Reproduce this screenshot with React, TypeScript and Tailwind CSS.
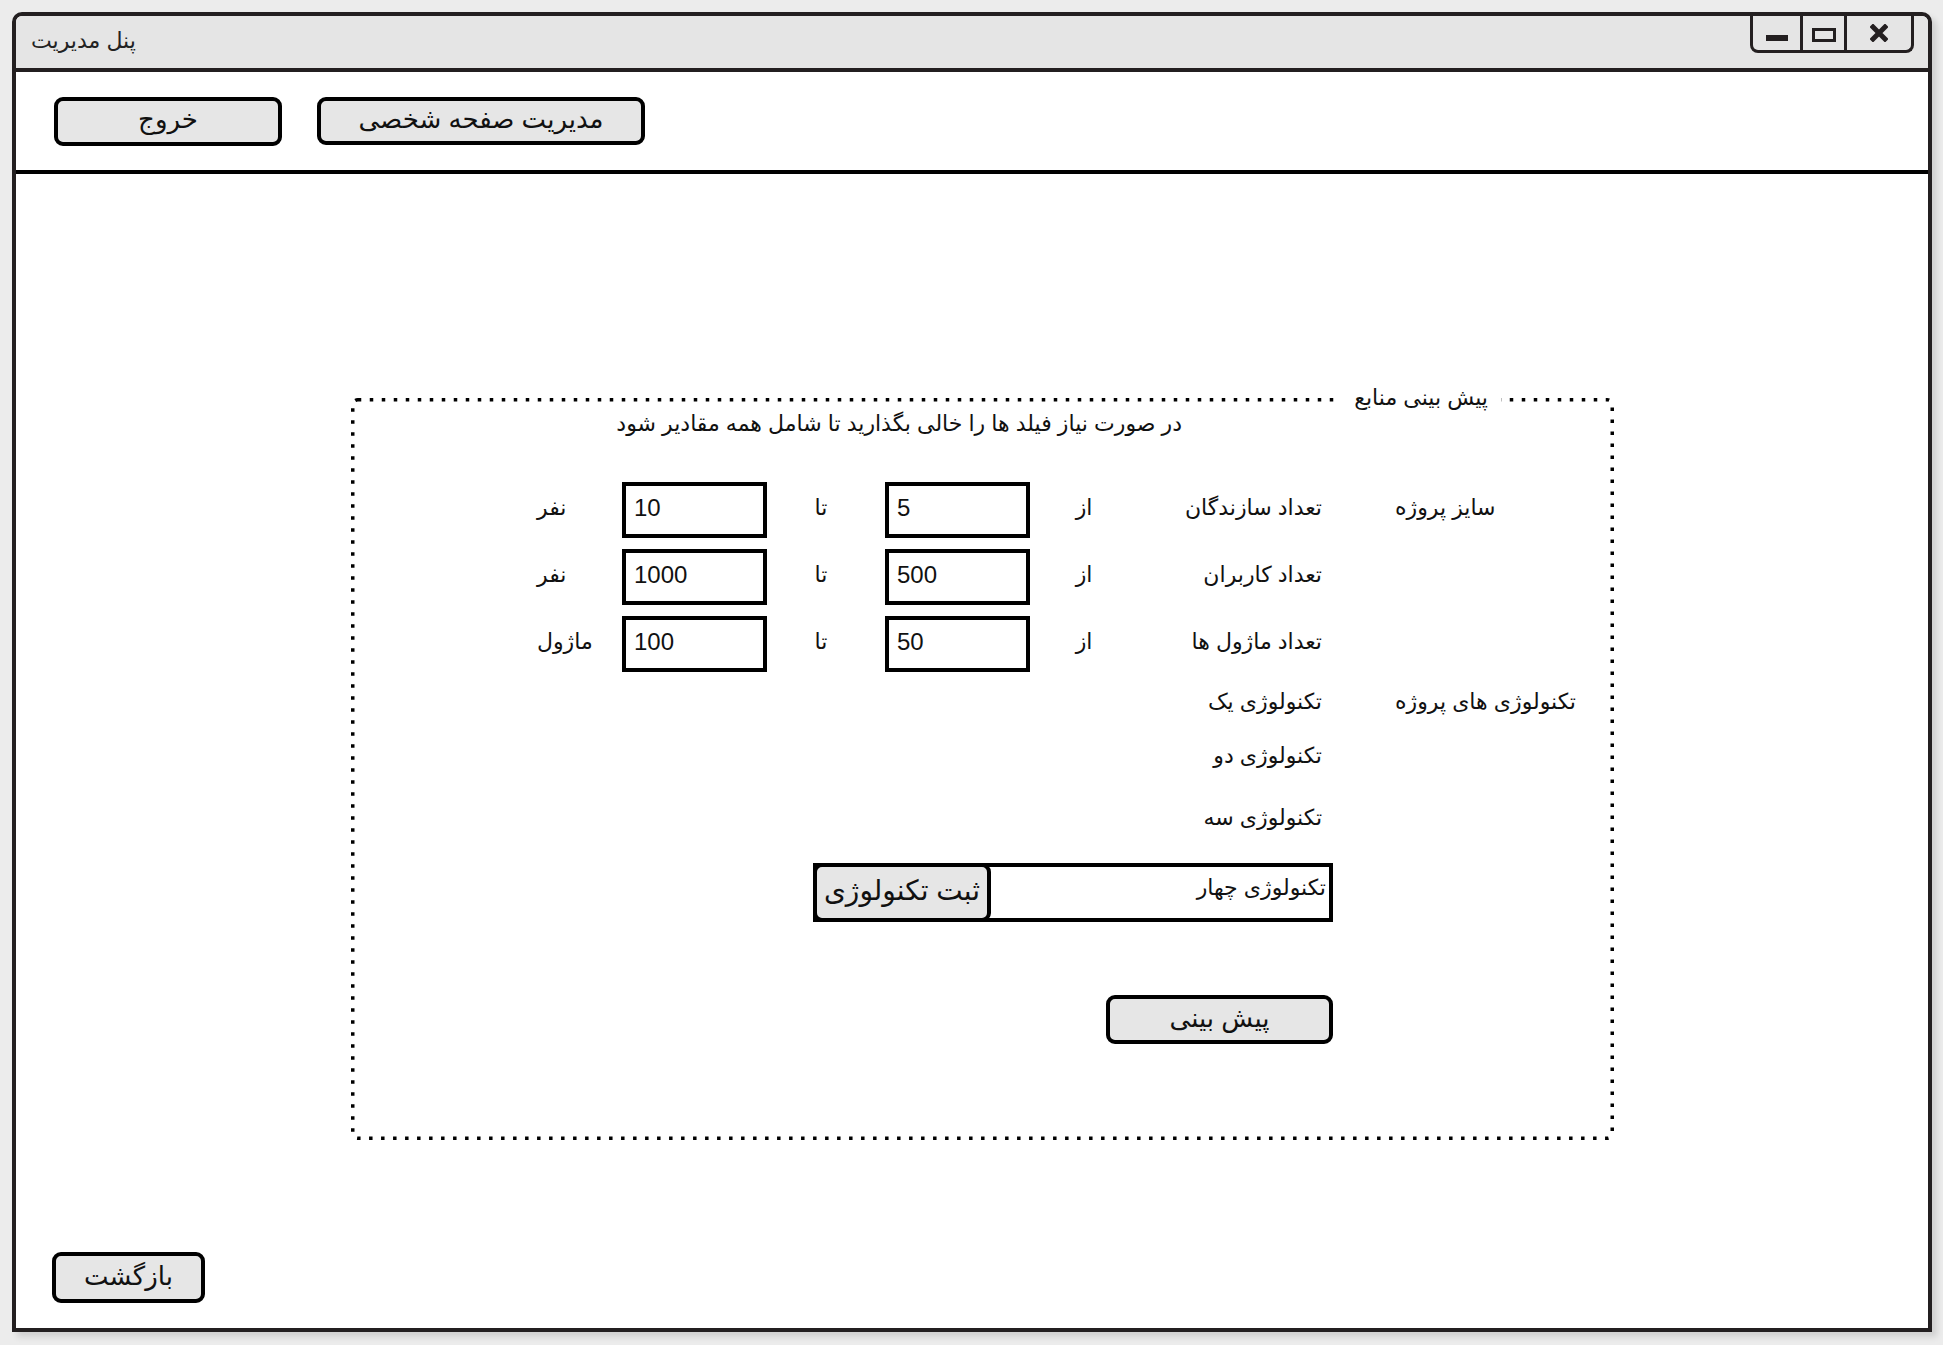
import React from 'react';

const font = "font-['Liberation_Sans','DejaVu_Sans',sans-serif]";

const sizeRows = [
  { label: 'تعداد سازندگان', category: 'سایز پروژه', from: '5', to: '10', unit: 'نفر' },
  { label: 'تعداد کاربران', category: '', from: '500', to: '1000', unit: 'نفر' },
  { label: 'تعداد ماژول ها', category: '', from: '50', to: '100', unit: 'ماژول' },
];

const techs = [
  { label: 'تکنولوژی یک', category: 'تکنولوژی های پروژه', mt: 'mt-[11px]' },
  { label: 'تکنولوژی دو', category: '', mt: 'mt-[14px]' },
  { label: 'تکنولوژی سه', category: '', mt: 'mt-[22px]' },
];

const Btn = ({ children, className = '' }: { children: React.ReactNode; className?: string }) => (
  <button
    className={`flex items-center justify-center rounded-[9px] border-4 border-black bg-[#e6e6e6] pb-[4px] text-[26px] leading-none text-[#111] ${className}`}
  >
    <span dir="rtl">{children}</span>
  </button>
);

const ValueBox = ({ value }: { value: string }) => (
  <div className="flex h-[56px] w-[145px] items-center border-4 border-black bg-white pb-[5px] pl-[8px] text-[24px] leading-none text-[#111]">
    {value}
  </div>
);

const WindowControls = () => (
  <div className="mr-[14px] flex h-[37px] self-start rounded-b-[8px] border-[3px] border-t-0 border-[#231f20]">
    <div className="flex w-[47px] items-end justify-center pb-[9px]">
      <div className="h-[6px] w-[22px] bg-[#231f20]" />
    </div>
    <div className="flex w-[44px] items-center justify-center border-l-[3px] border-[#231f20]">
      <div className="mt-[3px] h-[14px] w-[24px] border-[3px] border-[#231f20]" />
    </div>
    <div className="flex w-[67px] items-center justify-center border-l-[3px] border-[#231f20]">
      <svg width="18" height="18" viewBox="0 0 18 18">
        <path d="M3 3 L15 15 M15 3 L3 15" stroke="#231f20" strokeWidth="5" strokeLinecap="square" />
      </svg>
    </div>
  </div>
);

export default function App() {
  return (
    <div className={`${font} min-h-screen w-full bg-[#ececec] pl-[12px] pt-[12px]`}>
      <div className="flex h-[1320px] w-[1920px] flex-col rounded-t-[10px] border-4 border-[#231f20] bg-white shadow-[5px_5px_6px_rgba(0,0,0,0.12)]">
        {/* title bar */}
        <div className="flex h-[56px] items-center justify-between rounded-t-[6px] border-b-4 border-[#231f20] bg-[#e5e5e5] pl-[15px]">
          <span dir="rtl" className="mb-[4px] text-[22px] text-[#222]">پنل مدیریت</span>
          <WindowControls />
        </div>

        {/* toolbar */}
        <div className="flex h-[102px] items-center gap-[35px] border-b-4 border-black pl-[38px]">
          <Btn className="h-[49px] w-[228px]">خروج</Btn>
          <Btn className="h-[48px] w-[328px]">مدیریت صفحه شخصی</Btn>
        </div>

        <div className="flex flex-1 flex-col">
          {/* forecast group */}
          <div className="relative ml-[335px] mt-[224px] h-[742px] w-[1263px]">
            <svg className="absolute inset-0" width="1263" height="742">
              <rect
                x="1.75"
                y="1.75"
                width="1259.5"
                height="738.5"
                rx="5"
                fill="none"
                stroke="#000"
                strokeWidth="3.5"
                strokeDasharray="3.5 8.5"
              />
            </svg>
            <div
              dir="rtl"
              className="absolute right-[113px] top-[-14px] bg-white px-[13px] text-[22px] leading-[28px] text-[#111]"
            >
              پیش بینی منابع
            </div>

            <div className="relative pt-[12px]">
              <div dir="rtl" className="w-[831px] text-[22px] leading-[28px] text-[#111]">
                در صورت نیاز فیلد ها را خالی بگذارید تا شامل همه مقادیر شود
              </div>

              <div className="ml-[186px] mt-[44px] grid grid-cols-[85px_145px_118px_145px_110px_182px_73px_1fr] gap-y-[11px] text-[22px] text-[#111]">
                {sizeRows.map((r) => (
                  <React.Fragment key={r.label}>
                    <div className="flex items-center pb-[6px]">
                      <span dir="rtl">{r.unit}</span>
                    </div>
                    <ValueBox value={r.to} />
                    <div className="flex items-center justify-center pb-[6px]">
                      <span dir="rtl" className="mr-[10px]">تا</span>
                    </div>
                    <ValueBox value={r.from} />
                    <div className="flex items-center justify-center pb-[6px]">
                      <span dir="rtl" className="mr-[2px]">از</span>
                    </div>
                    <div dir="rtl" className="flex items-center pb-[6px]">{r.label}</div>
                    <div />
                    <div dir="rtl" className="flex items-center justify-end pb-[6px]">
                      <span>{r.category}</span>
                    </div>
                  </React.Fragment>
                ))}
              </div>

              <div className="ml-[186px] text-[22px] text-[#111]">
                {techs.map((t) => (
                  <div key={t.label} className={`grid h-[40px] grid-cols-[785px_73px_1fr] items-center ${t.mt}`}>
                    <div dir="rtl" className="pb-[4px]">{t.label}</div>
                    <div />
                    <div dir="rtl" className="flex justify-end pb-[4px]">
                      <span>{t.category}</span>
                    </div>
                  </div>
                ))}

                <div className="ml-[276px] mt-[24px] flex h-[59px] w-[520px] border-4 border-black">
                  <Btn className="-m-[4px] h-[59px] w-[178px] shrink-0 text-[28px]">ثبت تکنولوژی</Btn>
                  <div dir="rtl" className="flex-1 pr-[3px] pt-[4px]">تکنولوژی چهار</div>
                </div>

                <Btn className="ml-[569px] mt-[73px] h-[49px] w-[227px]">پیش بینی</Btn>
              </div>
            </div>
          </div>

          <Btn className="mb-[25px] ml-[36px] mt-auto h-[51px] w-[153px]">بازگشت</Btn>
        </div>
      </div>
    </div>
  );
}
